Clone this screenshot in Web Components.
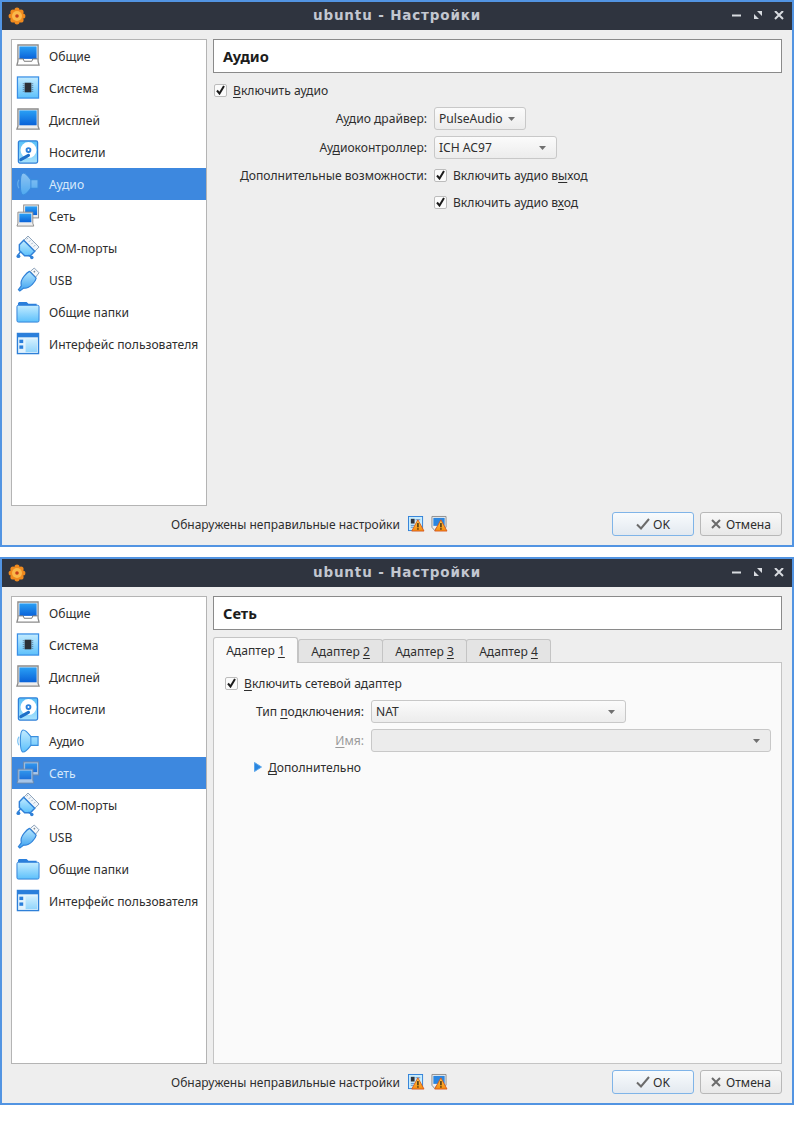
<!DOCTYPE html>
<html lang="ru">
<head>
<meta charset="utf-8">
<title>ubuntu - Настройки</title>
<style>
  html, body { margin: 0; padding: 0; background: #ffffff; }
  body { font-family: "Noto Sans", sans-serif; font-size: 12.1px; color: #2e2e2e; }
  settings-dialog + settings-dialog { margin-top: 10px; }
  u { text-underline-offset: 2px; }
</style>
</head>
<body>
<template id="nav-items">
  <nav-item icon="general">Общие</nav-item>
  <nav-item icon="system">Система</nav-item>
  <nav-item icon="display">Дисплей</nav-item>
  <nav-item icon="storage">Носители</nav-item>
  <nav-item icon="audio">Аудио</nav-item>
  <nav-item icon="network">Сеть</nav-item>
  <nav-item icon="serial">COM-порты</nav-item>
  <nav-item icon="usb">USB</nav-item>
  <nav-item icon="folder">Общие папки</nav-item>
  <nav-item icon="ui">Интерфейс пользователя</nav-item>
</template>

<settings-dialog heading="ubuntu - Настройки" selected="Аудио" style="height:547px">
  <page-header>Аудио</page-header>
  <audio-page>
    <check-box checked><u>В</u>ключить аудио</check-box>
    <form-grid>
      <span class="lbl">А<u>у</u>дио драйвер:</span>
      <combo-box width="92">PulseAudio</combo-box>
      <span class="lbl">Ау<u>д</u>иоконтроллер:</span>
      <combo-box width="123">ICH AC97</combo-box>
      <span class="lbl">Дополнительные возможности:</span>
      <check-box checked>Включить аудио в<u>ы</u>ход</check-box>
      <span></span>
      <check-box checked>Включить аудио в<u>х</u>од</check-box>
    </form-grid>
  </audio-page>
</settings-dialog>

<settings-dialog heading="ubuntu - Настройки" selected="Сеть" style="height:548px">
  <page-header>Сеть</page-header>
  <tab-panel>
    <tab-button slot="tabs" active>Адаптер <u>1</u></tab-button>
    <tab-button slot="tabs">Адаптер <u>2</u></tab-button>
    <tab-button slot="tabs">Адаптер <u>3</u></tab-button>
    <tab-button slot="tabs">Адаптер <u>4</u></tab-button>
    <network-page>
      <check-box checked><u>В</u>ключить сетевой адаптер</check-box>
      <net-grid>
        <span class="lbl">Тип <u>п</u>одключения:</span>
        <combo-box width="255">NAT</combo-box>
        <span class="lbl off"><u>И</u>мя:</span>
        <combo-box width="400" disabled></combo-box>
      </net-grid>
      <more-toggle><u>Д</u>ополнительно</more-toggle>
    </network-page>
  </tab-panel>
</settings-dialog>

<script>
const grad = (id, a, b) => `<linearGradient id="${id}" x1="0" y1="0" x2="0" y2="1"><stop offset="0" stop-color="${a}"/><stop offset="1" stop-color="${b}"/></linearGradient>`;
const blue = grad('b', '#2aa0f5', '#0a62d8');
const light = grad('l', '#c4ecff', '#5cc0fb');
const warn = `<linearGradient id="w" x1="0" y1="0" x2="0" y2="1"><stop offset="0" stop-color="#ffcf45"/><stop offset="1" stop-color="#f58a10"/></linearGradient>
  <path d="M10.500 4L17 16H4z" fill="url(#w)" stroke="#d8541a" stroke-width=".9" stroke-linejoin="round"/><rect x="9.800" y="7.500" width="1.500" height="4.500" fill="#3a2a10"/><rect x="9.800" y="13" width="1.500" height="1.500" fill="#3a2a10"/>`;

const ICONS = {
  general: `<defs>${blue}</defs><path d="M2 1h21v17l1 4H1l1-4z" fill="#fff" stroke="#8c8c8c" stroke-width="1.400"/><rect x="3.500" y="2.500" width="18" height="13" fill="url(#b)"/><path d="M2.500 15.500h5l1 2.500h8l1-2.500h5" fill="none" stroke="#777"/>`,
  system: `<defs>${light}</defs><rect x="1.500" y="1" width="22" height="22" fill="url(#l)" stroke="#3a8fe6" stroke-width="1.300"/><rect x="9" y="7" width="7" height="10" fill="#2b2f36"/><path d="M7 8h2M7 10h2M7 12h2M7 14h2M7 16h2M16 8h2M16 10h2M16 12h2M16 14h2M16 16h2" stroke="#5a7a95" stroke-width=".8"/>`,
  display: `<defs>${blue}</defs><path d="M2 1h21v18l1 3H1l1-3z" fill="#eee" stroke="#8c8c8c" stroke-width="1.400"/><rect x="3.500" y="2.500" width="18" height="15.500" fill="url(#b)"/>`,
  storage: `<defs>${grad('s', '#58c0f8', '#a8e2fd')}</defs><rect x="2.500" y="1" width="20" height="23" rx="1.500" fill="url(#s)" stroke="#2f80d8" stroke-width="1.300"/><circle cx="13" cy="10.500" r="8.300" fill="#fff"/><circle cx="13" cy="10.500" r="3" fill="#2a7fdc"/><circle cx="13" cy="10.500" r="1" fill="#fff"/><path d="M5 20.500l8-4.500" stroke="#1e6fc8" stroke-width="3.200" stroke-linecap="round"/>`,
  audio: `<defs>${light}</defs><path d="M7.500 1c3 0 5 3 8 7H23v9h-7.500c-3 4-5 7-8 7-2 0-3-5-3-11.500S5.500 1 7.500 1z" fill="url(#l)" stroke="#3a8fdf" stroke-width="1.200"/><path d="M15.500 8v9" stroke="#3a8fdf"/><path d="M3 8c-1.600 3-1.600 6 0 9" fill="none" stroke="#7cc4f5" stroke-width="1.300"/>`,
  network: `<defs>${blue}</defs><rect x="8" y="1" width="15.500" height="13.500" fill="#eee" stroke="#8c8c8c"/><rect x="9.500" y="2.500" width="12.500" height="9" fill="url(#b)"/><path d="M2 8.500h15.500v11.500l1 3H1l1-3z" fill="#eee" stroke="#8c8c8c"/><rect x="3.500" y="10" width="12.500" height="9" fill="url(#b)"/>`,
  serial: `<defs>${light}</defs><path d="M8 4.500L12.500 0 24 11.500 19.500 16z" fill="#f0f5fa" stroke="#8aa0b8"/><path d="M11 3.500l1.500-1.500M13.500 6l1.500-1.500M16 8.500l1.500-1.500M18.500 11l1.500-1.500" stroke="#9cb0c2"/><path d="M3.500 9L8 4.500 19.500 16 15 20.500H9L3.500 15z" fill="url(#l)" stroke="#2f80d8" stroke-width="1.500"/><path d="M5 16l-3 4M13 20l3 2" stroke="#2f80d8" stroke-width="1.500"/><circle cx="2.500" cy="21" r="2" fill="#2f80d8"/><circle cx="16.500" cy="22.500" r="1.800" fill="#2f80d8"/>`,
  usb: `<defs>${grad('u', '#b8e8ff', '#3aa0f0')}</defs><path d="M15 3.500L19 0l5 5-3.500 4.500z" fill="#f6f8fa" stroke="#8aa0b8"/><rect x="18.500" y="2.800" width="1.600" height="1.600" fill="#7a8a98" transform="rotate(45 19 3.500)"/><path d="M14 3.500l7 7c-.5 3-2 4.500-4 6.500-3.500 3.500-6 4.500-9 4l-4 3-1.500-1.500 3-4C4.500 15 6 11.500 8.500 8.500 10.500 6 12 4.500 14 3.500z" fill="url(#u)" stroke="#2f80d8" stroke-width="1.200"/>`,
  folder: `<defs>${light}</defs><path d="M2 6V4C2 2.500 3 2 4 2h7l2 2h8.500v4H2z" fill="#2a7fdc"/><rect x="1" y="5.500" width="23" height="17.500" rx="1.500" fill="url(#l)" stroke="#2f80d8"/>`,
  ui: `<defs>${light}</defs><rect x="1.500" y="1.500" width="22" height="21" fill="#e2f3fd" stroke="#2f80d8" stroke-width="1.400"/><rect x="2" y="2" width="21" height="3.500" fill="#2a7fdc"/><rect x="10" y="7.500" width="12" height="13.500" fill="url(#l)" opacity=".6"/><rect x="3.500" y="8" width="4" height="3.500" fill="#2a7fdc"/><rect x="3.500" y="14" width="4" height="3.500" fill="#2a7fdc"/>`,
  warnDetails: `<rect x=".5" y=".5" width="15" height="15" fill="#c8ecfd" stroke="#2f80d8"/><rect x="3" y="3" width="4" height="5" fill="#30343c"/><path d="M8 4h5M3 10h4M3 12h3" stroke="#5a90c8"/>${warn}`,
  warnDisplay: `<path d="M1 .5h15v11.500H6l-2 3.500-3-3.500z" fill="#eee" stroke="#8c8c8c"/><rect x="2.500" y="2" width="12" height="8.500" fill="#2b86e0"/>${warn}`
};

// простые элементы-обёртки
class BaseEl extends HTMLElement {
  constructor() {
    super();
    this.attachShadow({ mode: 'open' });
  }
  connectedCallback() {
    this.shadowRoot.innerHTML = this.view();
  }
}

class VbIcon extends BaseEl {
  view() {
    const size = this.getAttribute('size') || 24;
    const box = this.getAttribute('box') || '0 0 25 25';
    return `<style>:host{display:block;width:${size}px;height:${size}px;flex:none}svg{display:block;overflow:visible}</style>
      <svg width="${size}" height="${size}" viewBox="${box}">${ICONS[this.getAttribute('name')]}</svg>`;
  }
}
customElements.define('vb-icon', VbIcon);

class TitleBar extends BaseEl {
  view() {
    return `<style>
      :host{display:flex;align-items:center;height:28px;background:#2f343f;color:#c3c7d0;flex:none}
      .side{width:80px;flex:none;display:flex;align-items:center}
      .logo{margin-left:6px;display:block}
      .t{flex:1;text-align:center;font:700 13.500px/26px "DejaVu Sans",sans-serif;letter-spacing:.85px;padding-bottom:2px}
      .btns{display:flex;gap:11px;padding-right:8px;justify-content:flex-end;box-sizing:border-box}
      .btns svg{display:block}
    </style>
    <div class="side">
    <svg class="logo" width="18" height="18" viewBox="0 0 18 18">
      <g fill="#f08a1e"><circle cx="9" cy="3.200" r="2.600"/><circle cx="9" cy="14.800" r="2.600"/><circle cx="3.200" cy="9" r="2.600"/><circle cx="14.800" cy="9" r="2.600"/><circle cx="5" cy="5" r="2.600"/><circle cx="13" cy="5" r="2.600"/><circle cx="5" cy="13" r="2.600"/><circle cx="13" cy="13" r="2.600"/></g>
      <circle cx="9" cy="9" r="5" fill="#fbb84a"/><circle cx="9" cy="9" r="1.800" fill="#c8401a"/>
    </svg>
    </div>
    <div class="t">${this.getAttribute('heading')}</div>
    <div class="side btns">
      <svg width="10" height="10" viewBox="0 0 10 10"><rect x="0" y="3.500" width="9" height="2" fill="#d8dbe0"/></svg>
      <svg width="10" height="10" viewBox="0 0 10 10" fill="#d8dbe0"><path d="M4 0h5v5zM1 3v5h5z"/></svg>
      <svg width="10" height="10" viewBox="0 0 10 10"><path d="M1 0l8 8M9 0L1 8" stroke="#d8dbe0" stroke-width="2"/></svg>
    </div>`;
  }
}
customElements.define('title-bar', TitleBar);

class NavItem extends BaseEl {
  view() {
    return `<style>
      :host{display:flex;align-items:center;height:32px;gap:9px;padding-left:4px;color:#2e2e2e}
      :host([selected]){background:#3d88df;color:#d6e9fb}
      :host([selected]) vb-icon{opacity:.6}
    </style><vb-icon name="${this.getAttribute('icon')}"></vb-icon><span><slot></slot></span>`;
  }
}
customElements.define('nav-item', NavItem);

class SettingsNav extends BaseEl {
  view() {
    return `<style>
      :host{display:block;width:194px;flex:none;background:#fff;border:1px solid #b4b4b4}
    </style><slot></slot>`;
  }
}
customElements.define('settings-nav', SettingsNav);

class PageHeader extends BaseEl {
  view() {
    return `<style>
      :host{display:flex;align-items:center;height:32px;background:#fff;border:1px solid #8a8a8a;padding-left:9px;flex:none;font-size:14.670px;font-weight:700;color:#1c1c1c}
    </style><slot></slot>`;
  }
}
customElements.define('page-header', PageHeader);

class DialogButton extends BaseEl {
  view() {
    const def = this.hasAttribute('default');
    return `<style>
      :host{display:flex;align-items:center;justify-content:center;gap:${def ? 3 : 5}px;width:80px;height:22px;border-radius:3px;
        border:1px solid ${def ? '#7fb4e8' : '#b8b8b8'};
        background:linear-gradient(${def ? '#f8fbfd,#e3e9f0' : '#f8f8f8,#e8e8e8'})}
      svg{display:block}
    </style>${def
      ? `<svg width="14" height="12" viewBox="0 0 14 12"><path d="M1 6.500l4 4L13 1" fill="none" stroke="#6b6b6b" stroke-width="2"/></svg>`
      : `<svg width="10" height="10" viewBox="0 0 10 10"><path d="M1 1l8 8M9 1L1 9" stroke="#6b6b6b" stroke-width="2"/></svg>`}<span><slot></slot></span>`;
  }
}
customElements.define('dialog-button', DialogButton);

class SettingsDialog extends BaseEl {
  view() {
    return `<style>
      :host{display:flex;flex-direction:column;box-sizing:border-box;width:794px;border:2px solid #5294e2;background:#eeeeee}
      .body{flex:1;display:flex;gap:6px;padding:9px 10px 0 9px;min-height:0}
      .main{flex:1;display:flex;flex-direction:column;min-width:0}
      .foot{display:flex;align-items:center;height:24px;margin:6px 10px 9px 9px;flex:none}
      .warn{margin-left:160px;white-space:nowrap;margin-right:8px;font-size:12px}
      .ic{display:flex;gap:7px}
      .sp{flex:1}
      .bt{display:flex;gap:6px}
    </style>
    <title-bar heading="${this.getAttribute('heading')}"></title-bar>
    <div class="body">
      <settings-nav id="nav"></settings-nav>
      <div class="main"><slot></slot></div>
    </div>
    <div class="foot">
      <span class="warn">Обнаружены неправильные настройки</span>
      <div class="ic"><vb-icon name="warnDetails" size="16" box="0 0 17 17"></vb-icon><vb-icon name="warnDisplay" size="16" box="0 0 17 17"></vb-icon></div>
      <div class="sp"></div>
      <div class="bt"><dialog-button default>OK</dialog-button><dialog-button>Отмена</dialog-button></div>
    </div>`;
  }
  connectedCallback() {
    super.connectedCallback();
    const nav = this.shadowRoot.getElementById('nav');
    nav.appendChild(document.getElementById('nav-items').content.cloneNode(true));
    const selected = this.getAttribute('selected');
    nav.querySelectorAll('nav-item').forEach(item => {
      if (item.textContent === selected) item.setAttribute('selected', '');
    });
  }
}
customElements.define('settings-dialog', SettingsDialog);

class CheckBox extends BaseEl {
  view() {
    return `<style>
      :host{display:flex;align-items:center;gap:6px;height:20px;white-space:nowrap}
      .box{box-sizing:border-box;width:13px;height:13px;background:#fbfbfb;border:1px solid #bcbcbc;border-radius:2px;flex:none;display:flex;align-items:center;justify-content:center}
      svg{display:block}
    </style><span class="box"><svg width="9" height="10" viewBox="0 0 9 10"><path d="M1 5.500l2.500 3L8 1" fill="none" stroke="#1c1c1c" stroke-width="2"/></svg></span><span><slot></slot></span>`;
  }
}
customElements.define('check-box', CheckBox);

class ComboBox extends BaseEl {
  view() {
    const off = this.hasAttribute('disabled');
    return `<style>
      :host{display:flex;align-items:center;justify-content:space-between;box-sizing:border-box;width:${this.getAttribute('width')}px;height:23px;
        border:1px solid #c8c8c8;border-radius:3px;padding:0 10px 0 4px;background:${off ? '#ececec' : 'linear-gradient(#fbfbfb,#ececec)'};color:#2e2e2e}
      svg{display:block}
    </style><span><slot></slot></span><svg width="7" height="4" viewBox="0 0 7 4"><path d="M0 0h7L3.500 4z" fill="#707070"/></svg>`;
  }
}
customElements.define('combo-box', ComboBox);

const LABEL_CSS = `::slotted(.lbl){justify-self:end;white-space:nowrap}::slotted(.off){color:#9a9a9a}`;

class AudioPage extends BaseEl {
  view() {
    return `<style>
      :host{display:flex;flex-direction:column;padding:7px 0 0 1px}
    </style><slot></slot>`;
  }
}
customElements.define('audio-page', AudioPage);

class FormGrid extends BaseEl {
  view() {
    return `<style>
      :host{display:grid;grid-template-columns:213px auto;justify-content:start;column-gap:7px;align-items:center;margin-top:7px;
        grid-template-rows:23px 23px 20px 22px;row-gap:6px}
      ${LABEL_CSS}
    </style><slot></slot>`;
  }
}
customElements.define('form-grid', FormGrid);

class TabButton extends BaseEl {
  view() {
    return `<style>
      :host{display:flex;align-items:center;justify-content:center;box-sizing:border-box;width:85px;height:23px;margin-top:2px;margin-right:-1px;
        background:#e4e4e4;border:1px solid #c4c4c4;border-bottom:0;border-radius:3px 3px 0 0;white-space:nowrap}
      :host([active]){background:#fafafa;height:26px;margin-top:0;margin-right:0;margin-bottom:-1px;position:relative;z-index:1}
    </style><span><slot></slot></span>`;
  }
}
customElements.define('tab-button', TabButton);

class TabPanel extends BaseEl {
  view() {
    return `<style>
      :host{display:flex;flex-direction:column;flex:1;margin-top:7px;min-height:0}
      .tabs{display:flex;flex:none}
      .pane{flex:1;background:#fafafa;border:1px solid #c4c4c4;box-sizing:border-box}
    </style><div class="tabs"><slot name="tabs"></slot></div><div class="pane"><slot></slot></div>`;
  }
}
customElements.define('tab-panel', TabPanel);

class NetworkPage extends BaseEl {
  view() {
    return `<style>:host{display:flex;flex-direction:column;padding:10px 0 0 11px}</style><slot></slot>`;
  }
}
customElements.define('network-page', NetworkPage);

class NetGrid extends BaseEl {
  view() {
    return `<style>
      :host{display:grid;grid-template-columns:139px auto;justify-content:start;column-gap:7px;row-gap:6px;align-items:center;margin-top:7px;grid-template-rows:23px 23px}
      ${LABEL_CSS}
    </style><slot></slot>`;
  }
}
customElements.define('net-grid', NetGrid);

class MoreToggle extends BaseEl {
  view() {
    return `<style>
      :host{display:flex;align-items:center;gap:6px;height:20px;margin:5px 0 0 29px}
      svg{display:block}
    </style><svg width="8" height="10" viewBox="0 0 8 10"><path d="M.5.5L7.500 5 .5 9.500z" fill="#2a86e0" stroke="#5aa6ea"/></svg><span><slot></slot></span>`;
  }
}
customElements.define('more-toggle', MoreToggle);
</script>
</body>
</html>
